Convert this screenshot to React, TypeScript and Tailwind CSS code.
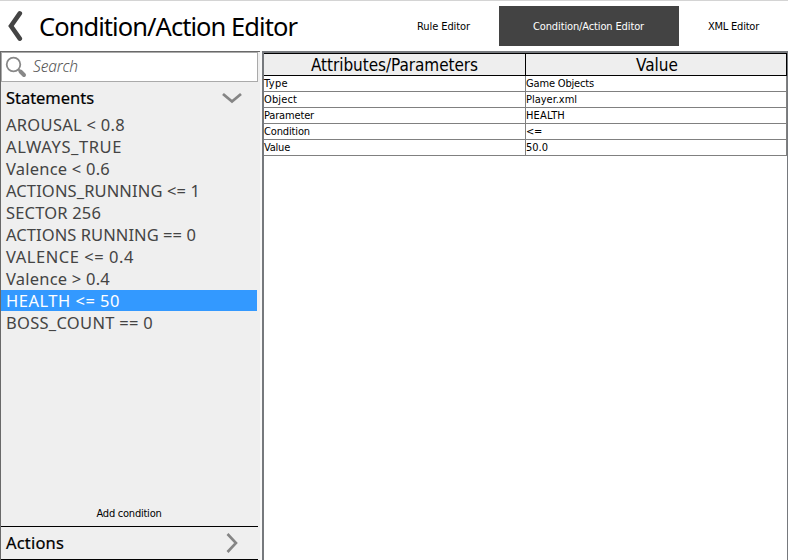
import React, { useLayoutEffect, useRef, useState } from "react";

/** Single-line label whose tracking is adjusted so the text spans `width` pixels. */
function Label({ text, width, className = "" }: { text: string; width: number; className?: string }) {
  const ref = useRef<HTMLSpanElement>(null);
  const [tracking, setTracking] = useState(0);
  useLayoutEffect(() => {
    if (ref.current) {
      const natural = ref.current.getBoundingClientRect().width;
      setTracking((width - natural) / text.length);
    }
  }, [text, width]);
  return (
    <span ref={ref} className={`inline-block whitespace-pre ${className}`} style={{ letterSpacing: tracking }}>
      {text}
    </span>
  );
}

const statements: [string, number][] = [
  ["AROUSAL < 0.8", 119],
  ["ALWAYS_TRUE", 116],
  ["Valence < 0.6", 104],
  ["ACTIONS_RUNNING <= 1", 194],
  ["SECTOR 256", 95],
  ["ACTIONS RUNNING == 0", 190],
  ["VALENCE <= 0.4", 128],
  ["Valence > 0.4", 104],
  ["HEALTH <= 50", 114],
  ["BOSS_COUNT == 0", 147],
];

const rows: [string, number, string, number][] = [
  ["Type", 24, "Game Objects", 68],
  ["Object", 33, "Player.xml", 51],
  ["Parameter", 50, "HEALTH", 39],
  ["Condition", 46, "<=", 16],
  ["Value", 26, "50.0", 22],
];

export default function App() {
  return (
    <div className="flex h-[560px] w-[788px] flex-col overflow-hidden bg-white font-['DejaVu_Sans_Condensed','DejaVu_Sans',sans-serif] text-black">
      <header className="flex h-[51px] shrink-0 border-t border-[#d4d4d4]">
        <svg className="mt-[9px] ml-[7px] h-8 w-4 shrink-0" viewBox="0 0 16 32" fill="none" stroke="#444" strokeWidth="4.6" strokeLinecap="round">
          <path d="M12.8 3.4 L4 16 L12.8 28.6" strokeLinejoin="miter" />
        </svg>
        <h1 className="ml-[16px] w-[353px] pt-[7px] font-['Noto_Sans',sans-serif] text-[25.5px] leading-9">
          <Label text="Condition/Action Editor" width={258} />
        </h1>
        <nav className="mt-[5px] flex h-10 text-[11px] leading-[41px]">
          <div className="w-[107px] pl-[25px]"><Label text="Rule Editor" width={53} /></div>
          <div className="w-[180px] bg-[#434343] pl-[34px] text-white"><Label text="Condition/Action Editor" width={111} /></div>
          <div className="w-[109px] pl-[29px]"><Label text="XML Editor" width={51} /></div>
        </nav>
      </header>

      <main className="flex min-h-0 flex-1">
        <aside className="flex w-[260px] flex-col border-t border-l border-[#696969] bg-[#efefef]">
          <div className="flex h-[30px] w-[257px] shrink-0 border border-[#aaa] bg-white">
            <svg className="mt-[3px] ml-[3px] h-[22px] w-[22px]" viewBox="0 0 22 22" fill="none" stroke="#888">
              <circle cx="8.5" cy="8.5" r="6.8" strokeWidth="1.8" />
              <path d="M13.5 13.5 L16 16" strokeWidth="2" />
              <path d="M15.5 15.5 L19 19" strokeWidth="4" strokeLinecap="round" />
            </svg>
            <Label text="Search" width={45} className="ml-[6px] font-['Noto_Sans',sans-serif] text-[15.5px] leading-[27px] font-light text-[#555] italic" />
          </div>
          <div className="flex h-8 shrink-0 items-center justify-between pt-px pr-[18px] pl-[5px] font-['Noto_Sans',sans-serif] text-[16.5px]">
            <Label text="Statements" width={88} className="[-webkit-text-stroke:0.2px_black]" />
            <svg className="mb-px h-3 w-5" viewBox="0 0 20 12" fill="none" stroke="#858585" strokeWidth="2.8">
              <path d="M1 2 L10 9.5 L19 2" />
            </svg>
          </div>
          <ul className="font-['Noto_Sans',sans-serif] text-[16.5px] leading-[22px] text-[#444]">
            {statements.map(([text, width]) => (
              <li key={text} className="h-[22px] w-64">
                <div className={`h-[21px] pl-[5px] ${text === "HEALTH <= 50" ? "bg-[#3399ff] text-white" : ""}`}>
                  <Label text={text} width={width} />
                </div>
              </li>
            ))}
          </ul>
          <div className="mt-auto flex h-[25px] shrink-0 justify-center pr-[3px] text-[11px] leading-[26px]">
            <Label text="Add condition" width={65} />
          </div>
          <div className="flex h-[34px] w-[257px] shrink-0 items-center justify-between border-y border-black pr-[20px] pl-[5px] font-['Noto_Sans',sans-serif] text-[16.5px]">
            <Label text="Actions" width={58} className="[-webkit-text-stroke:0.2px_black]" />
            <svg className="h-5 w-3" viewBox="0 0 12 20" fill="none" stroke="#858585" strokeWidth="2.6">
              <path d="M1.5 1 L10 10 L1.5 19" />
            </svg>
          </div>
        </aside>
        <div className="w-[2px] bg-[#f8f8f8]" />
        <section className="w-[526px] border-t-2 border-r border-l-2 border-[#76797d] bg-white">
          <div className="flex h-[23px] border-y border-r border-black bg-[#eee] text-[17px] leading-[22px]">
            <div className="w-[261px] pl-[47px]"><Label text="Attributes/Parameters" width={167} /></div>
            <div className="flex-1 border-l border-black pl-[110px]"><Label text="Value" width={42} /></div>
          </div>
          {rows.map(([name, nameWidth, value, valueWidth]) => (
            <div key={name} className="flex h-4 border-r border-b border-[#808080] text-[11px] leading-4">
              <div className="w-[261px]"><Label text={name} width={nameWidth} /></div>
              <div className="flex-1 border-l border-[#808080]"><Label text={value} width={valueWidth} /></div>
            </div>
          ))}
        </section>
      </main>
    </div>
  );
}
